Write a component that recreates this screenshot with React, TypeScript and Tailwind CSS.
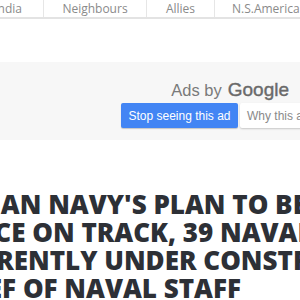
export default function App() {
  const navFont = { fontFamily: '"Open Sans", sans-serif' };
  return (
    <div className="w-[300px] h-[300px] overflow-hidden bg-white relative">
      {/* top nav */}
      <nav
        className="flex h-[19px] border-b-2 border-[#e3e3e3] text-[12px] leading-[17px] text-[#8a8a8a] whitespace-nowrap"
        style={navFont}
      >
        <div className="w-[44px] shrink-0 flex justify-end pr-[21px] border-r border-[#e6e6e6]">India</div>
        <div className="w-[103px] shrink-0 text-center border-r border-[#e6e6e6]">Neighbours</div>
        <div className="w-[68px] shrink-0 text-center border-r border-[#e6e6e6]">Allies</div>
        <div className="shrink-0 pl-[17px]">N.S.America</div>
      </nav>

      {/* ad block */}
      <div className="mt-[43px] h-[78px] bg-[#f7f7f7] pt-[14px]" style={{ fontFamily: '"Liberation Sans", Arial, sans-serif' }}>
        <div className="flex justify-end items-baseline pr-[11px] h-[24px] text-[#7a7a7a]">
          <span className="text-[16.5px]">Ads by</span>
          <span className="ml-[6px] text-[19px] text-[#6a6a6a] [-webkit-text-stroke:0.4px_#6a6a6a]">Google</span>
        </div>
        <div className="flex pl-[121px] mt-[3px] whitespace-nowrap text-[12px]">
          <div className="shrink-0 h-[25px] w-[117px] rounded-[2px] bg-[#4285f4] text-white flex items-center justify-center shadow-[0_1px_1px_rgba(0,0,0,0.2)]">
            Stop seeing this ad
          </div>
          <div className="shrink-0 ml-[2px] h-[25px] w-[120px] rounded-[2px] bg-white text-[#8a8a8a] flex items-center pl-[7px] shadow-[0_1px_2px_rgba(0,0,0,0.2)]">
            Why this ad?
          </div>
        </div>
      </div>

      {/* headline */}
      <h1
        className="mt-[50px] -ml-[58px] text-[26px] leading-[28px] font-extrabold text-[#2d3036] whitespace-nowrap"
        style={{ fontFamily: '"Open Sans", sans-serif' }}
      >
        INDIAN NAVY'S PLAN TO BE 200-SHIP
        <br />
        FORCE ON TRACK, 39 NAVAL SHIPS
        <br />
        CURRENTLY UNDER CONSTRUCTION:
        <br />
        CHIEF OF NAVAL STAFF
      </h1>
    </div>
  );
}
